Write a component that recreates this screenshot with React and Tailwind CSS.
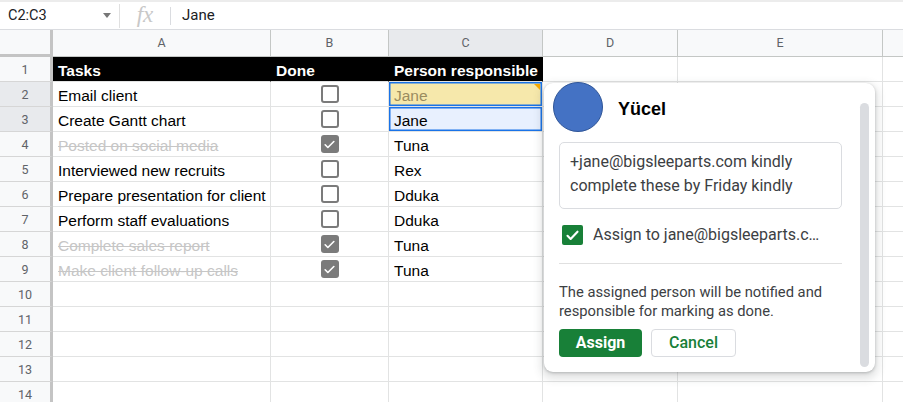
import React from 'react';

const COLS = [
  { key: 'A', w: 'w-[218px]' },
  { key: 'B', w: 'w-[118px]' },
  { key: 'C', w: 'w-[154px]' },
  { key: 'D', w: 'w-[135px]' },
  { key: 'E', w: 'w-[205px]' },
  { key: 'F', w: 'w-[40px]' },
];

const TASKS = [
  { task: 'Email client', done: false, who: 'Jane' },
  { task: 'Create Gantt chart', done: false, who: 'Jane' },
  { task: 'Posted on social media', done: true, who: 'Tuna' },
  { task: 'Interviewed new recruits', done: false, who: 'Rex' },
  { task: 'Prepare presentation for client', done: false, who: 'Dduka' },
  { task: 'Perform staff evaluations', done: false, who: 'Dduka' },
  { task: 'Complete sales report', done: true, who: 'Tuna' },
  { task: 'Make client follow-up calls', done: true, who: 'Tuna' },
];

const cellFont = { fontFamily: '"Liberation Sans", Arial, sans-serif' };
const uiFont = { fontFamily: 'Roboto, "Noto Sans", sans-serif' };

const Checkbox = ({ checked }) =>
  checked ? (
    <div className="w-[18px] h-[18px] rounded-[3px] bg-[#7b7b7b] flex items-center justify-center">
      <svg width="13" height="13" viewBox="0 0 24 24" fill="none" stroke="white" strokeWidth="3" strokeLinecap="round" strokeLinejoin="round">
        <path d="M4 12.5l5 5L20 6.5" />
      </svg>
    </div>
  ) : (
    <div className="w-[18px] h-[18px] rounded-[3px] border-2 border-[#7b7b7b] bg-white" />
  );

const RowHeader = ({ n, active }) => (
  <div
    className={`w-[53px] shrink-0 border-r-[3px] border-r-[#c4c4c4] border-b border-b-[#d6d6d6] flex items-center justify-center pt-[2px] text-[12.5px] text-[#5f6368] ${active ? 'bg-[#e8eaed]' : 'bg-[#f8f9fa]'}`}
    style={uiFont}
  >
    {n}
  </div>
);

const cellBase = 'shrink-0 border-r border-r-[#e2e3e3] border-b border-b-[#e2e3e3] flex items-center';

const FormulaBar = () => (
  <div className="h-[30px] border-t-2 border-t-[#ececec] border-b border-b-[#dadce0] flex items-center bg-white" style={uiFont}>
    <div className="w-[119px] flex items-center justify-between pl-[8px] pr-[8px] text-[14.5px] text-[#202124]">
      <span>C2:C3</span>
      <svg width="8" height="5" viewBox="0 0 8 5"><path d="M0 0h8L4 5z" fill="#777" /></svg>
    </div>
    <div className="w-px h-[24px] bg-[#e0e0e0]" />
    <div className="w-[50px] flex justify-center text-[#c8c8c8] text-[23px] italic" style={{ fontFamily: '"Liberation Serif", serif' }}>
      fx
    </div>
    <div className="w-px h-[18px] bg-[#dadce0]" />
    <div className="pl-[11px] text-[15px] text-[#202124]">Jane</div>
  </div>
);

const ColumnHeaders = () => (
  <div className="flex h-[27px]">
    <div className="w-[53px] shrink-0 bg-[#f8f9fa] border-r-[3px] border-r-[#c4c4c4] border-b-[3px] border-b-[#c4c4c4]" />
    {COLS.map((c) => (
      <div
        key={c.key}
        className={`${c.w} shrink-0 border-r border-r-[#c4c7c5] border-b border-b-[#c4c7c5] flex items-center justify-center text-[12.5px] text-[#5f6368] ${c.key === 'C' ? 'bg-[#e8eaed]' : 'bg-[#f8f9fa]'}`}
        style={uiFont}
      >
        {c.key === 'F' ? '' : c.key}
      </div>
    ))}
  </div>
);

const Popup = () => (
  <div className="absolute left-[544px] top-[83px] w-[331px] h-[289px] bg-white rounded-[9px] shadow-[0_1px_3px_rgba(60,64,67,0.3),0_4px_8px_3px_rgba(60,64,67,0.15)]" style={uiFont}>
    <div className="flex items-center h-[48px]">
      <div className="ml-[9px] -mt-[1px] w-[50px] h-[50px] rounded-full bg-[#4472c4] border-[1.5px] border-[#2f5597]" />
      <div className="ml-[15px] mt-[5px] text-[18px] font-bold text-black" style={cellFont}>Yücel</div>
    </div>
    <div className="absolute right-[6px] top-[20px] w-[9px] h-[264px] rounded-full bg-[#dadce0]" />
    <div className="ml-[15px] mt-[11px] w-[283px] h-[67px] border border-[#dadce0] rounded-[5px] px-[10px] pt-[7px] text-[16px] leading-[24px] text-[#3c4043]">
      +jane@bigsleeparts.com kindly complete these by Friday kindly
    </div>
    <div className="ml-[18px] mt-[14px] flex items-center gap-[10px]">
      <div className="w-[21px] h-[20px] rounded-[2px] bg-[#188038] flex items-center justify-center">
        <svg width="15" height="15" viewBox="0 0 24 24" fill="none" stroke="white" strokeWidth="3.4" strokeLinecap="round" strokeLinejoin="round">
          <path d="M4 12.5l5 5L20 6" />
        </svg>
      </div>
      <span className="text-[16px] text-[#3c4043]">Assign to jane@bigsleeparts.c…</span>
    </div>
    <div className="ml-[15px] mt-[16px] w-[283px] h-px bg-[#e0e0e0]" />
    <div className="ml-[15px] mt-[19px] w-[300px] text-[14.75px] leading-[19px] text-[#3c4043]">
      The assigned person will be notified and responsible for marking as done.
    </div>
    <div className="ml-[15px] mt-[8px] flex gap-[9px]">
      <button className="w-[83px] h-[28px] rounded-[4px] bg-[#188038] text-white text-[16px] font-bold">Assign</button>
      <button className="w-[85px] h-[28px] rounded-[4px] border border-[#dadce0] bg-white text-[#188038] text-[16px] font-medium">Cancel</button>
    </div>
  </div>
);

export default function App() {
  return (
    <div className="relative w-[903px] h-[402px] overflow-hidden bg-white">
      <FormulaBar />
      <ColumnHeaders />
      <div style={cellFont}>
        <div className="flex h-[25px]">
          <RowHeader n={1} />
          <div className={`${cellBase} w-[218px] bg-black border-r-black pl-[5px] pt-[3px] text-white font-bold text-[15.5px]`}>Tasks</div>
          <div className={`${cellBase} w-[118px] bg-black border-r-black pl-[5px] pt-[3px] text-white font-bold text-[15.5px]`}>Done</div>
          <div className={`${cellBase} w-[154px] bg-black border-r-black pl-[5px] pt-[3px] text-white font-bold text-[15.5px]`}>Person responsible</div>
          <div className={`${cellBase} w-[135px]`} />
          <div className={`${cellBase} w-[205px]`} />
          <div className={`${cellBase} w-[40px]`} />
        </div>
        {TASKS.map((t, i) => {
          const n = i + 2;
          const strike = t.done;
          let cStyle = '';
          if (n === 2) cStyle = 'bg-[#f6e8ab] text-[#9a8c60] shadow-[inset_0_0_0_1.5px_#1a73e8] relative';
          if (n === 3) cStyle = 'bg-[#e8f0fe] text-black shadow-[inset_0_0_0_1.5px_#1a73e8]';
          return (
            <div key={n} className="flex h-[25px]">
              <RowHeader n={n} active={n === 2 || n === 3} />
              <div className={`${cellBase} w-[218px] pl-[5px] pt-[3px] text-[15.5px] whitespace-nowrap ${strike ? 'line-through text-[#c6c6c6]' : 'text-black'}`}>
                {t.task}
              </div>
              <div className={`${cellBase} w-[118px] justify-center`}>
                <Checkbox checked={t.done} />
              </div>
              <div className={`${cellBase} w-[154px] pl-[5px] pt-[3px] text-[15.5px] ${cStyle || 'text-black'}`}>
                {t.who}
                {n === 2 && (
                  <div className="absolute right-[2px] top-[2px] w-0 h-0 border-l-[6px] border-l-transparent border-t-[6px] border-t-[#f9ab00]" />
                )}
              </div>
              <div className={`${cellBase} w-[135px]`} />
              <div className={`${cellBase} w-[205px]`} />
              <div className={`${cellBase} w-[40px]`} />
            </div>
          );
        })}
        {[10, 11, 12, 13, 14].map((n) => (
          <div key={n} className="flex h-[25px]">
            <RowHeader n={n} />
            {COLS.map((c) => (
              <div key={c.key} className={`${cellBase} ${c.w}`} />
            ))}
          </div>
        ))}
      </div>
      <Popup />
    </div>
  );
}
